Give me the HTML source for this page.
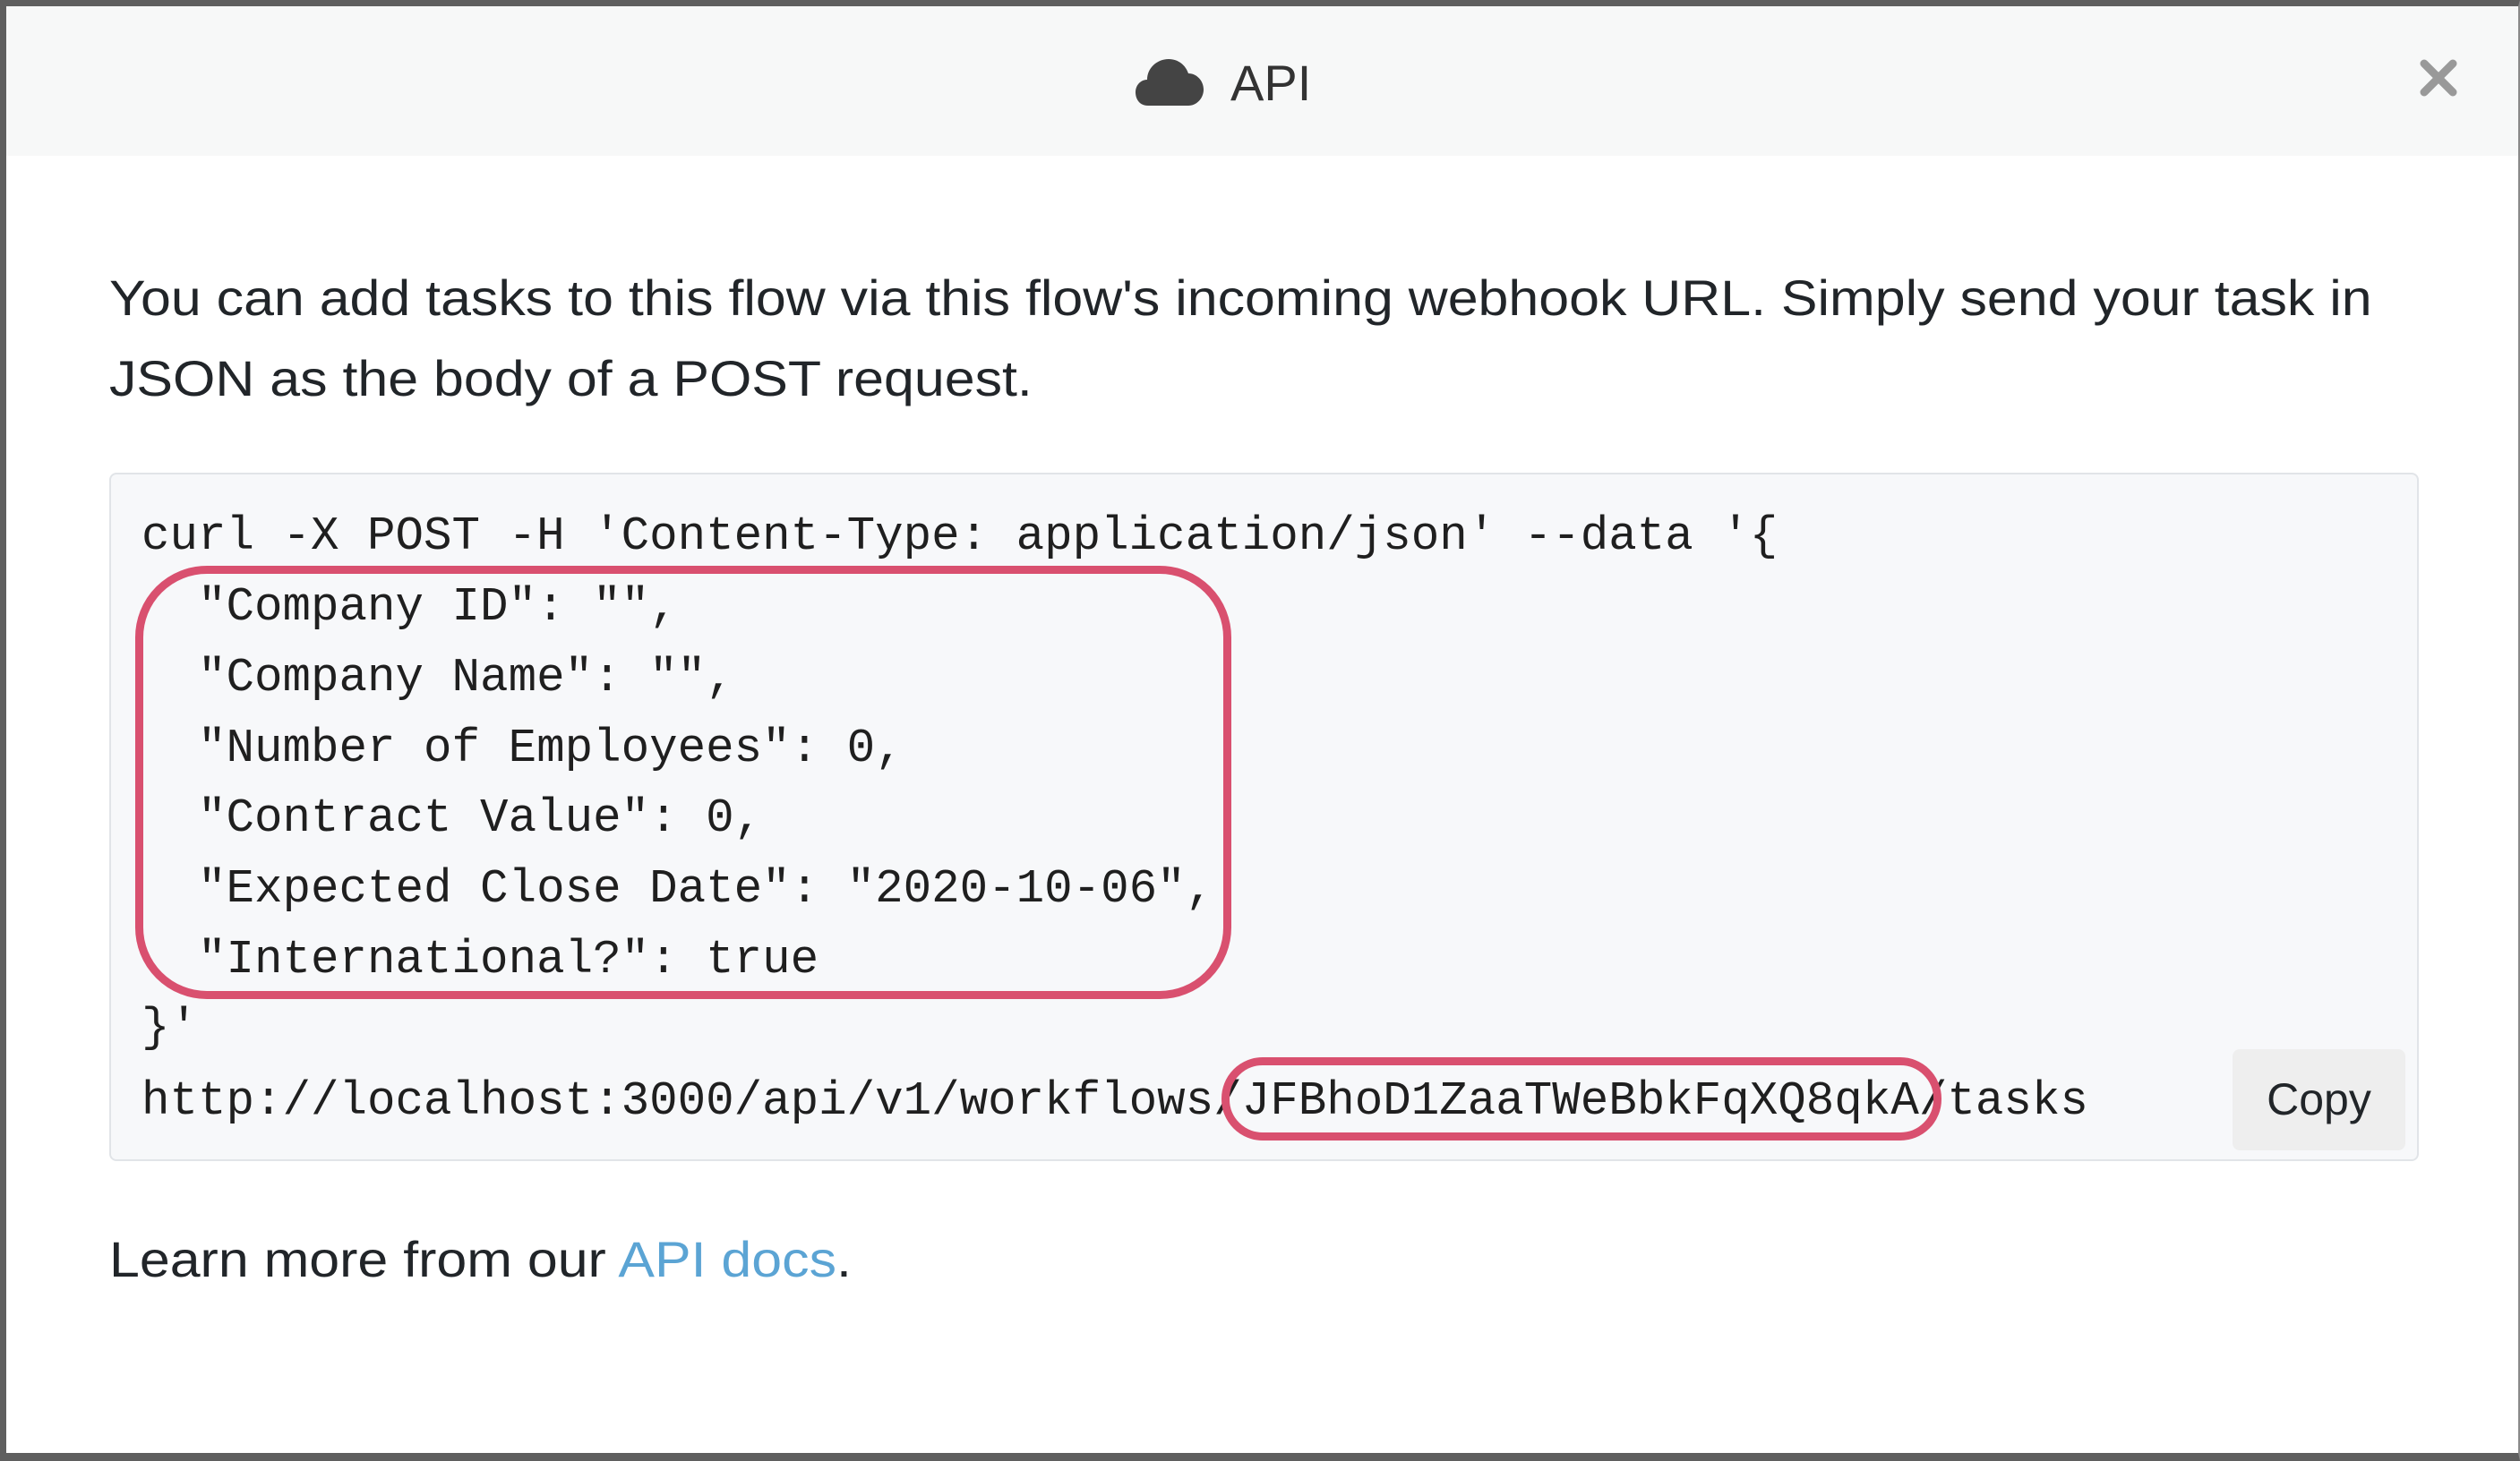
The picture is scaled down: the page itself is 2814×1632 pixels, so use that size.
<!DOCTYPE html>
<html><head><meta charset="utf-8"><style>
*{margin:0;padding:0;box-sizing:border-box}
body{width:2814px;height:1632px;position:relative;overflow:hidden;background:#fff;font-family:"Liberation Sans",Arial,sans-serif;color:#212529}
.frame{position:absolute;left:0;top:0;width:2814px;height:1632px;border-top:7px solid #5f5f5f;border-left:7px solid #5f5f5f;border-bottom:9px solid #5f5f5f;border-right:2px solid #8a8a8a}
.hdr{position:absolute;left:7px;top:7px;width:2805px;height:167px;background:#f7f8f8}
.title{position:absolute;left:1374px;top:60px;font-size:56px;color:#333}
.close{position:absolute;left:2700px;top:64px}
.p{position:absolute;left:122px;font-size:56px;color:#212529;white-space:nowrap;transform:scaleX(1.087);transform-origin:0 0}
.code{position:absolute;left:122px;top:528px;width:2579px;height:769px;background:#f7f8fa;border:2px solid #e1e4e8;border-radius:8px}
.ln{position:absolute;left:158px;font-family:"Liberation Mono",monospace;font-size:52.5px;white-space:pre;color:#1f1f1f;line-height:60px}
.r1{position:absolute;left:151px;top:632px;width:1224px;height:484px;border:9px solid #d9506f;border-radius:80px}
.r2{position:absolute;left:1364px;top:1181px;width:804px;height:93px;border:9px solid #d9506f;border-radius:46px}
.copy{position:absolute;left:2493px;top:1172px;width:193px;height:113px;background:#eeeeee;border-radius:8px;font-size:50px;line-height:113px;text-align:center;color:#212529}
a{color:#5ba4d4;text-decoration:none}
</style></head><body>
<div class="frame"></div>
<div class="hdr"></div>
<svg style="position:absolute;left:1268px;top:62px" width="76" height="56" viewBox="0 0 76 56"><path d="M14 56 C4 56 0 48 0 41 C0 33 6 27 13 27 C13 14 24 4 37 4 C48 4 56 11 59 20 C68 20 76 28 76 38 C76 48 68 56 59 56 Z" fill="#444"/></svg>
<div class="title">API</div>
<svg class="close" width="46" height="46" viewBox="0 0 46 46"><path d="M7 7 L39 39 M39 7 L7 39" stroke="#999" stroke-width="9" stroke-linecap="round"/></svg>
<div class="p" style="top:300px">You can add tasks to this flow via this flow's incoming webhook URL. Simply send your task in</div>
<div class="p" style="top:390px">JSON as the body of a POST request.</div>
<div class="code"></div>
<div class="ln" style="top:569px">curl -X POST -H 'Content-Type: application/json' --data '{</div>
<div class="ln" style="top:648px">  "Company ID": "",</div>
<div class="ln" style="top:727px">  "Company Name": "",</div>
<div class="ln" style="top:806px">  "Number of Employees": 0,</div>
<div class="ln" style="top:884px">  "Contract Value": 0,</div>
<div class="ln" style="top:963px">  "Expected Close Date": "2020-10-06",</div>
<div class="ln" style="top:1042px">  "International?": true</div>
<div class="ln" style="top:1118px">}'</div>
<div class="ln" style="top:1200px">http://localhost:3000/api/v1/workflows/JFBhoD1ZaaTWeBbkFqXQ8qkA/tasks</div>
<div class="r1"></div>
<div class="r2"></div>
<div class="copy">Copy</div>
<div class="p" style="top:1374px">Learn more from our <a>API docs</a>.</div>
</body></html>
